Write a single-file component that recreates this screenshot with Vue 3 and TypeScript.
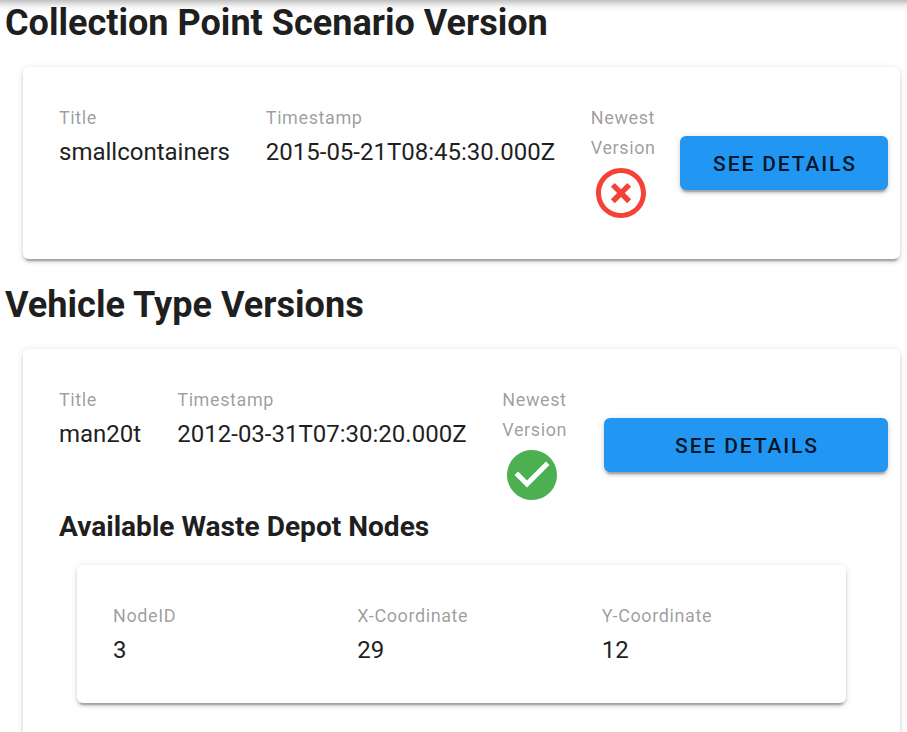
<script setup lang="ts">
interface Version {
  heading: string
  title: string
  timestamp: string
  newest: boolean
  kind: string
}

const versions: Version[] = [
  { heading: 'Collection Point Scenario Version', title: 'smallcontainers', timestamp: '2015-05-21T08:45:30.000Z', newest: false, kind: 'scenario' },
  { heading: 'Vehicle Type Versions', title: 'man20t', timestamp: '2012-03-31T07:30:20.000Z', newest: true, kind: 'vehicle' },
]
const node = [
  { label: 'NodeID', value: 3 },
  { label: 'X-Coordinate', value: 29 },
  { label: 'Y-Coordinate', value: 12 },
]
</script>

<template>
  <main class="page">
    <div class="bar"></div>
    <section v-for="v in versions" :key="v.kind" :class="['section', v.kind]">
      <h1>{{ v.heading }}</h1>
      <div class="card">
        <div class="row">
          <div class="col title">
            <span class="label">Title</span>
            <span class="value">{{ v.title }}</span>
          </div>
          <div class="col time">
            <span class="label">Timestamp</span>
            <span class="value">{{ v.timestamp }}</span>
          </div>
          <div class="col newest">
            <span class="label">Newest<br />Version</span>
            <svg v-if="v.newest" class="icon ok" viewBox="0 0 24 24">
              <path d="M12 2C6.5 2 2 6.5 2 12S6.5 22 12 22 22 17.5 22 12 17.5 2 12 2M10 17L5 12L6.41 10.59L10 14.17L17.59 6.58L19 8L10 17Z" />
            </svg>
            <svg v-else class="icon bad" viewBox="0 0 24 24">
              <path d="M12,20C7.59,20 4,16.41 4,12C4,7.59 7.59,4 12,4C16.41,4 20,7.59 20,12C20,16.41 16.41,20 12,20M12,2C6.47,2 2,6.47 2,12C2,17.53 6.47,22 12,22C17.53,22 22,17.53 22,12C22,6.47 17.53,2 12,2" />
              <path d="M14.5,7.95L12,10.45L9.5,7.95L7.95,9.5L10.45,12L7.95,14.5L9.5,16.05L12,13.55L14.5,16.05L16.05,14.5L13.55,12L16.05,9.5Z" />
            </svg>
          </div>
          <button type="button">See details</button>
        </div>
        <template v-if="v.kind === 'vehicle'">
          <h2>Available Waste Depot Nodes</h2>
          <div class="card nodes">
            <div v-for="n in node" :key="n.label" class="col">
              <span class="label">{{ n.label }}</span>
              <span class="value">{{ n.value }}</span>
            </div>
          </div>
        </template>
      </div>
    </section>
  </main>
</template>

<style>
body {
  overflow: hidden;
  background: #fff;
}
</style>

<style scoped>
* {
  box-sizing: border-box;
}
.page {
  height: 732px;
  overflow: hidden;
  color: #1f1f1f;
  font-family: Roboto, sans-serif;
  font-size: 24px;
  line-height: 36px;
}
.bar {
  position: absolute;
  top: -62px;
  left: -10px;
  right: -10px;
  height: 60px;
  box-shadow: 0 3px 6px -1.5px rgba(0, 0, 0, 0.2), 0 6px 7.5px rgba(0, 0, 0, 0.14), 0 1.5px 15px rgba(0, 0, 0, 0.12);
}
.section {
  height: 282px;
  padding: 0 7px 0 5px;
}
h1 {
  height: 67px;
  margin: 0;
  padding-top: 5px;
  font-size: 36.05px;
  font-weight: 700;
  line-height: 36px;
  white-space: nowrap;
}
.vehicle h1 {
  font-size: 36.12px;
}
.card {
  height: 192px;
  margin-left: 18px;
  padding: 36px 12px 0 36px;
  border-radius: 6px;
  background: #fff;
  box-shadow: 0 4.5px 1.5px -3px rgba(0, 0, 0, 0.2), 0 3px 3px rgba(0, 0, 0, 0.14), 0 1.5px 7.5px rgba(0, 0, 0, 0.12);
}
.vehicle .card {
  height: 430px;
}
.row {
  display: flex;
  height: 156px;
}
.col {
  display: flex;
  flex-direction: column;
}
.title {
  width: 206.8px;
}
.time {
  width: 325px;
}
.newest {
  width: 89.2px;
}
.vehicle .title {
  width: 118.3px;
}
.vehicle .newest {
  width: 101.7px;
}
.label {
  color: rgba(0, 0, 0, 0.4);
  font-size: 18px;
  line-height: 30px;
  letter-spacing: 0.6px;
}
.value {
  line-height: 38px;
}
.icon {
  width: 60px;
  height: 60px;
  fill: #4caf50;
}
.bad {
  fill: #f44336;
}
button {
  flex: 1;
  height: 54px;
  margin-top: 33px;
  padding: 2px 0 0 2px;
  border: 0;
  border-radius: 6px;
  background: #2196f3;
  box-shadow: 0 4.5px 1.5px -3px rgba(0, 0, 0, 0.2), 0 3px 3px rgba(0, 0, 0, 0.14), 0 1.5px 7.5px rgba(0, 0, 0, 0.12);
  color: rgba(0, 0, 0, 0.87);
  font: 500 21px Roboto, sans-serif;
  letter-spacing: 1.875px;
  text-transform: uppercase;
}
.vehicle .row {
  height: 124px;
}
h2 {
  height: 56px;
  margin: 0;
  font-size: 28.08px;
  font-weight: 700;
  line-height: 36px;
}
.vehicle .nodes {
  display: grid;
  grid-template-columns: repeat(3, 1fr);
  height: 138px;
  margin-right: 42px;
  padding: 36px 0 0 36px;
}
</style>
